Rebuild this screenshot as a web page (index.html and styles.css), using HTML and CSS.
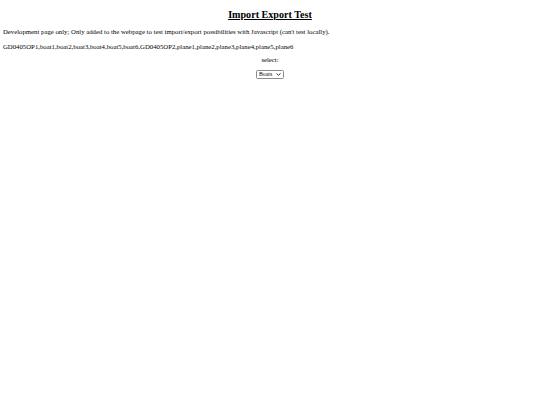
FILE: index.html
```html
<!DOCTYPE html>
<html>
<head>
<meta charset="utf-8">
<link rel="stylesheet" href="styles.css">
</head>
<body>
<h2 class="title">Import Export Test</h2>
<p class="note">Development page only; Only added to the webpage to test import/export possibilities with Javascript (can't test locally).</p>
<p class="note list">GD0405OP1,boat1,boat2,boat3,boat4,boat5,boat6,GD0405OP2,plane1,plane2,plane3,plane4,plane5,plane6</p>
<p class="label">select:</p>
<div class="picker">
<span class="select-wrap">
<select class="select"><option>Boats</option><option>Planes</option></select>
<svg class="chev" width="5" height="3" viewBox="0 0 5 3"><path d="M0.5 0.5 L2.5 2.3 L4.5 0.5" fill="none" stroke="#000" stroke-width="0.8"/></svg>
</span>
</div>
</body>
</html>
```
FILE: styles.css
```css
body {
  margin: 3px;
  font-family: "Liberation Serif", "Times New Roman", serif;
  font-size: 6.75px;
  color: #000;
  background: #fff;
}
.title {
  font-size: 10.125px;
  font-weight: bold;
  text-align: center;
  text-decoration: underline;
  margin: 6px 0 7px;
  line-height: 12px;
}
.note {
  margin: 0 0 7px;
  line-height: 8px;
}
.note.list {
  margin-bottom: 5px;
}
.label {
  text-align: center;
  margin: 0 0 6px;
  line-height: 8px;
}
.picker {
  text-align: center;
  line-height: 9px;
}
.select-wrap {
  position: relative;
  display: inline-block;
  vertical-align: top;
}
.select {
  appearance: none;
  -webkit-appearance: none;
  box-sizing: border-box;
  width: 28px;
  height: 9px;
  margin: 0;
  padding: 0 0 0 2px;
  border: 1px solid #8a8a8a;
  border-radius: 1.5px;
  background: #fff;
  color: #000;
  font-family: "Liberation Serif", serif;
  font-size: 5.8px;
  line-height: 7px;
  display: block;
}
.chev {
  position: absolute;
  right: 3px;
  top: 3px;
  pointer-events: none;
}
```
